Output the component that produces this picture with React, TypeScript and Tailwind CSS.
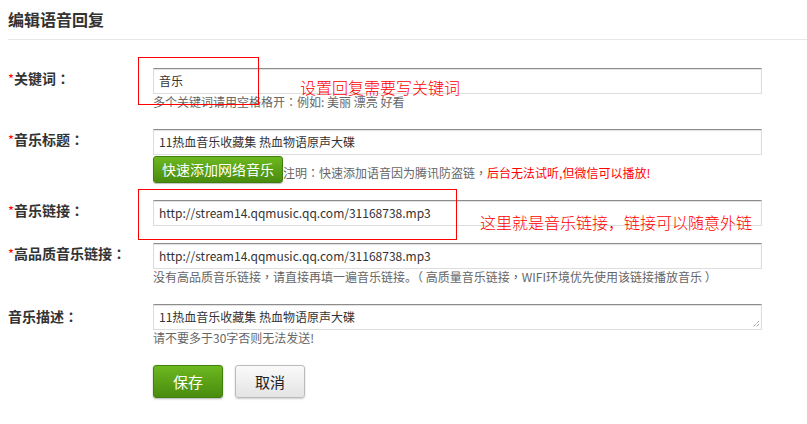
import React from "react";

const font = { fontFamily: '"Microsoft YaHei", "Noto Sans CJK SC", "Noto Sans", sans-serif' };
const tc = { fontFamily: '"Noto Sans CJK TC", sans-serif' };

function Label({ text, required = true }: { text: string; required?: boolean }) {
  return (
    <div className="w-[145px] shrink-0 h-[20px] leading-[20px] text-[14px] font-bold text-[#333]">
      {required && <span className="text-[#f00] font-normal text-[13px]">*</span>}
      {text}
      <span style={tc}>：</span>
    </div>
  );
}

function Input({ value }: { value: string }) {
  return (
    <div className="w-[609px] h-[26px] border border-[#ddd] border-t-[#8c8c8c] shadow-[inset_0_1px_1px_rgba(0,0,0,0.12)] bg-white pl-[5px] text-[12px] leading-[24px] text-[#333] truncate">
      {value}
    </div>
  );
}

export default function App() {
  return (
    <div className="relative w-[807px] h-[424px] bg-white overflow-hidden" style={font}>
      <div className="ml-[8px] h-[40px] border-b border-[#e8e8e8] flex items-center pb-[2px]">
        <div className="text-[16px] font-bold text-[#333]">编辑语音回复</div>
      </div>

      <div className="pl-[8px]">
        {/* row 1 */}
        <div className="flex mt-[28px]">
          <Label text="关键词" />
          <div>
            <Input value="音乐" />
            <div className="text-[12px] leading-[16px] text-[#666]">
              多个关键词请用空格格开<span style={tc}>：</span>例如: 美丽 漂亮 好看
            </div>
          </div>
        </div>

        {/* row 2 */}
        <div className="flex mt-[19px]">
          <Label text="音乐标题" />
          <div>
            <Input value="11热血音乐收藏集 热血物语原声大碟" />
            <div className="flex items-end mt-[1px]">
              <div className="w-[130px] h-[27px] rounded-[3px] border border-[#417f0c] bg-gradient-to-b from-[#6cb820] to-[#4a8c0e] text-white text-[14px] leading-[25px] text-center shadow-[0_1px_1px_rgba(0,0,0,0.25)]">
                快速添加网络音乐
              </div>
              <div className="text-[12px] leading-[16px] text-[#666] pb-[2px]">
                注明<span style={tc}>：</span>快速添加语音因为腾讯防盗链<span style={tc}>，</span>
                <span className="text-[#f00]">后台无法试听,但微信可以播放!</span>
              </div>
            </div>
          </div>
        </div>

        {/* row 3 */}
        <div className="flex mt-[17px]">
          <Label text="音乐链接" />
          <Input value="http://stream14.qqmusic.qq.com/31168738.mp3" />
        </div>

        {/* row 4 */}
        <div className="flex mt-[17px]">
          <Label text="高品质音乐链接" />
          <div>
            <Input value="http://stream14.qqmusic.qq.com/31168738.mp3" />
            <div className="text-[12px] leading-[16px] text-[#666]">
              没有高品质音乐链接<span style={tc}>，</span>请直接再填一遍音乐链接。（ 高质量音乐链接<span style={tc}>，</span>WIFI环境优先使用该链接播放音乐 ）
            </div>
          </div>
        </div>

        {/* row 5 */}
        <div className="flex mt-[19px]">
          <div className="pt-[2px]">
            <Label text="音乐描述" required={false} />
          </div>
          <div>
            <div className="relative">
              <Input value="11热血音乐收藏集 热血物语原声大碟" />
              <svg className="absolute right-[2px] bottom-[2px]" width="8" height="8" viewBox="0 0 8 8">
                <path d="M7 1 L1 7 M7 4 L4 7" stroke="#777" strokeWidth="1" strokeDasharray="1 1" />
              </svg>
            </div>
            <div className="text-[12px] leading-[16px] text-[#666]">请不要多于30字否则无法发送!</div>
          </div>
        </div>

        {/* buttons */}
        <div className="flex gap-[12px] ml-[145px] mt-[19px]">
          <div className="w-[70px] h-[33px] rounded-[3px] border border-[#417f0c] bg-gradient-to-b from-[#6cb820] to-[#4a8c0e] text-white text-[15px] leading-[31px] text-center shadow-[0_1px_2px_rgba(0,0,0,0.3)]">
            保存
          </div>
          <div className="w-[70px] h-[33px] rounded-[3px] border border-[#bbb] bg-gradient-to-b from-[#fafafa] to-[#e4e4e4] text-[#222] text-[15px] leading-[31px] text-center shadow-[0_1px_2px_rgba(0,0,0,0.2)]">
            取消
          </div>
        </div>
      </div>

      {/* annotations */}
      <div className="absolute left-[138px] top-[57px] w-[121px] h-[48px] border border-[#f00]" />
      <div className="absolute left-[300px] top-[79px] text-[16px] leading-[16px] text-[#f00] font-light">设置回复需要写关键词</div>
      <div className="absolute left-[138px] top-[189px] w-[319px] h-[51px] border border-[#f00]" />
      <div className="absolute left-[480px] top-[214px] text-[16px] leading-[16px] text-[#f00] font-light">这里就是音乐链接，链接可以随意外链</div>
    </div>
  );
}
